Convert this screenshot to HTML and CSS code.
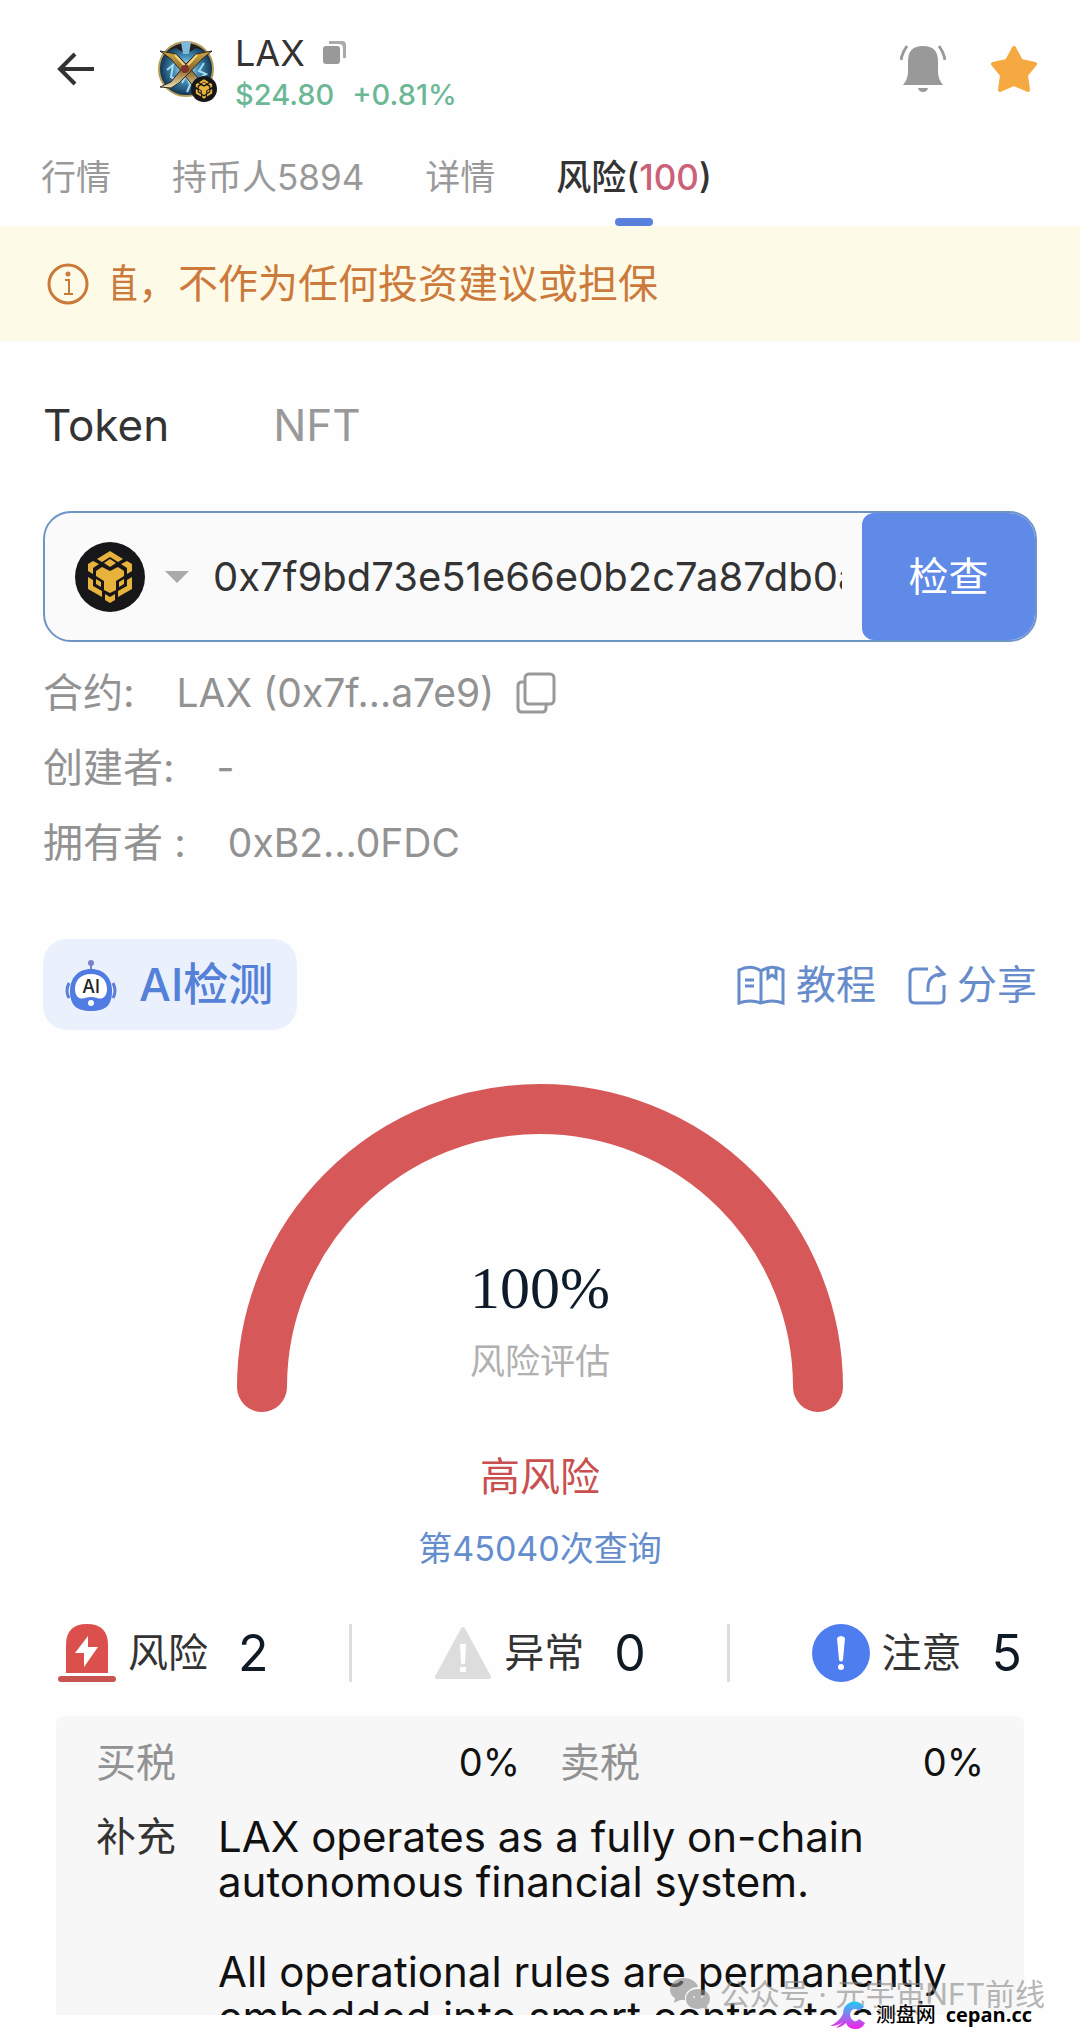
FILE: index.html
```
<!DOCTYPE html>
<html lang="zh-CN">
<head>
    <meta charset="UTF-8">
    <meta name="viewport" content="width=device-width, initial-scale=1.0">
    <title>LAX</title>
    <link rel="stylesheet" href="styles.css">
</head>
<body>
    <!-- shared chain logo -->
    <svg class="sprite" aria-hidden="true">
        <symbol id="bnb" viewBox="-35 -35 70 70">
            <circle r="35" fill="#17171a"/>
            <g fill="#e8b33c">
                <path d="M0-26 13-18 8-15 0-20-8-15-13-18Z"/>
                <path d="M0-18 6-14 0-10-6-14Z"/>
                <path d="M-17-16-11-13-17-9V-3L-22-6V-13Z"/>
                <path d="M17-16 11-13 17-9V-3L22-6V-13Z"/>
                <path d="M-14-6-8-10 0-6 8-10 14-6V-1L6 4V13L0 16-6 13V4L-14-1Z"/>
                <path d="M-14 2-9 5V10L-14 7Z"/>
                <path d="M14 2 9 5V10L14 7Z"/>
                <path d="M-22 0-17 3V9L-8 14V20L-22 12Z"/>
                <path d="M22 0 17 3V9L8 14V20L22 12Z"/>
                <path d="M-5 17 0 20 5 17V23L0 26-5 23Z"/>
            </g>
        </symbol>
    </svg>

    <header class="header">
        <button class="icon-btn back" aria-label="返回">
            <svg width="38" height="34" viewBox="0 0 38 34" fill="none" stroke="#333" stroke-width="4"><path d="M37 17H3M18 2 3 17 18 32"/></svg>
        </button>
        <div class="avatar">
            <svg width="58" height="58" viewBox="0 0 58 58">
                <defs>
                    <radialGradient id="orb"><stop offset="0" stop-color="#d5f0fa"/><stop offset=".45" stop-color="#4592bd"/><stop offset="1" stop-color="#0e304b"/></radialGradient>
                    <linearGradient id="blade" x1="0" y1="0" x2="0" y2="1"><stop offset="0" stop-color="#d2a843"/><stop offset=".5" stop-color="#8c682b"/><stop offset="1" stop-color="#e9dfb5"/></linearGradient>
                </defs>
                <circle cx="29" cy="29" r="27" fill="url(#orb)" stroke="#b59a58" stroke-width="2"/>
                <path d="M10 11Q29-4 48 11L39 8 29 14 19 8Z" fill="#231e1c"/>
                <path d="M24 2h10l-2 12h-6Z" fill="#7cb9dd"/>
                <path d="M10 30l6-5-2 12 6 3-6 6M47 23l-5 8 7 3-9 5M25 43l4-8 4 10-3 7" fill="none" stroke="#a8daef" stroke-width="2"/>
                <path d="M3 11 19 14 32 27 49 48 40 51 25 32 14 19Z" fill="url(#blade)" stroke="#362a20"/>
                <path d="M55 11 39 14 26 27 14 42 3 47 14 48 22 43 33 32 45 19Z" fill="url(#blade)" stroke="#362a20"/>
                <path d="M18 15 28 26M40 15 31 25" stroke="#f1d681" stroke-width="2"/>
                <circle cx="28" cy="29" r="4" fill="#7e332a"/>
            </svg>
            <svg class="avatar-chain"><use href="#bnb"/></svg>
        </div>
        <div class="coin">
            <div class="coin-name">
                <h1>LAX</h1>
                <button class="icon-btn" aria-label="复制">
                    <svg width="23" height="24" viewBox="0 0 23 24"><path d="M6 0H19Q23 0 23 4V17H20V7Q20 3 16 3H6Z" fill="#aaa"/><rect y="5" width="17" height="18" rx="3" fill="#999"/></svg>
                </button>
            </div>
            <div class="coin-price"><span>$24.80</span><span>+0.81%</span></div>
        </div>
        <div class="header-actions">
            <button class="icon-btn" aria-label="提醒">
                <svg width="46" height="48" viewBox="0 0 46 48"><path d="M8 16Q8 1 23 1T38 16V27Q38 34 43 40H3Q8 34 8 27Z" fill="#999"/><path d="M18 43H28Q27 47 23 47T18 43Z" fill="#999"/><path d="M7 1Q2 8 1 15M39 1Q44 8 45 15" fill="none" stroke="#999" stroke-width="3"/></svg>
            </button>
            <button class="icon-btn" aria-label="收藏">
                <svg width="48" height="48" viewBox="0 0 48 48"><path d="M24 3 31 16 45 19 36 30 38 45 24 39 10 45 12 30 3 19 17 16Z" fill="#f5a940" stroke="#f5a940" stroke-width="4" stroke-linejoin="round"/></svg>
            </button>
        </div>
    </header>

    <nav class="tabs">
        <a href="#">行情</a>
        <a href="#">持币人5894</a>
        <a href="#">详情</a>
        <a href="#" class="active">风险(<span class="tab-score">100</span>)</a>
    </nav>

    <div class="notice">
        <svg width="42" height="42" viewBox="0 0 42 42" fill="none" stroke="#c97a3a" stroke-width="3"><circle cx="21" cy="21" r="19"/><path d="M18 17H22V31M17 31H26" stroke-width="2"/><circle cx="21" cy="11" r="1" fill="#c97a3a"/></svg>
        <div class="notice-window"><p class="notice-text">值，不作为任何投资建议或担保</p></div>
    </div>

    <main class="main">
        <nav class="types">
            <a href="#" class="active">Token</a>
            <a href="#">NFT</a>
        </nav>

        <form class="search">
            <button type="button" class="chain" aria-label="选择链">
                <svg width="70" height="70"><use href="#bnb"/></svg>
                <svg width="24" height="12" viewBox="0 0 24 12"><path d="M0 0H24L12 12Z" fill="#aaa"/></svg>
            </button>
            <input type="text" class="address" aria-label="合约地址" value="0x7f9bd73e51e66e0b2c7a87db0a7e9">
            <button type="submit" class="check">检查</button>
        </form>

        <dl class="meta">
            <div>
                <dt>合约:</dt>
                <dd>LAX (0x7f...a7e9)</dd>
                <button class="icon-btn" aria-label="复制合约">
                    <svg width="40" height="42" viewBox="0 0 40 42" fill="none" stroke="#999" stroke-width="3"><rect x="9" y="2" width="29" height="30" rx="4"/><path d="M9 10H6Q2 10 2 14V36Q2 40 6 40H26Q30 40 30 36V32"/></svg>
                </button>
            </div>
            <div><dt>创建者:</dt><dd>-</dd></div>
            <div><dt>拥有者 :</dt><dd>0xB2...0FDC</dd></div>
        </dl>

        <div class="tools">
            <button class="ai-btn">
                <svg width="52" height="52" viewBox="0 0 52 52">
                    <path d="M26 4V12" stroke="#7a80cc" stroke-width="2"/>
                    <circle cx="26" cy="4" r="3" fill="#7a80cc"/>
                    <path d="M4 24Q0 32 4 39M48 24Q52 32 48 39" fill="none" stroke="#5b7fd6" stroke-width="3"/>
                    <path d="M26 10C39 10 47 19 47 32C47 46 41 52 26 52S5 46 5 32C5 19 13 10 26 10Z" fill="#4f7be3"/>
                    <path d="M26 15C37 15 42 22 42 30C42 38 37 41 32 39Q26 37 20 39C15 41 10 38 10 30C10 22 15 15 26 15Z" fill="#fff"/>
                    <circle cx="26" cy="44" r="3" fill="#fff"/>
                    <text x="26" y="34" class="robot-text">AI</text>
                </svg>
                AI检测
            </button>
            <div class="links">
                <a href="#">
                    <svg width="48" height="40" viewBox="0 0 48 40" fill="none" stroke="#678ccc" stroke-width="3"><path d="M24 6Q14-1 2 5V38Q13 34 24 38Q35 34 46 38V5Q34-1 24 6ZM24 6V38M8 15H17M8 21H17M31 4V13L35 10 39 13V3"/></svg>
                    教程
                </a>
                <a href="#">
                    <svg width="38" height="40" viewBox="0 0 38 40" fill="none" stroke="#678ccc" stroke-width="3"><path d="M20 4H7Q2 4 2 9V33Q2 38 7 38H31Q36 38 36 33V20M20 27V23Q20 9 35 9M28 1 36 9 29 11"/></svg>
                    分享
                </a>
            </div>
        </div>

        <section class="gauge">
            <svg width="606" height="328" viewBox="0 0 606 328"><path d="M25 303A278 278 0 0 1 581 303" fill="none" stroke="#d65858" stroke-width="50" stroke-linecap="round"/></svg>
            <div class="gauge-text">
                <div class="gauge-value">100%</div>
                <div class="gauge-label">风险评估</div>
            </div>
        </section>
        <p class="level">高风险</p>
        <p class="queries">第45040次查询</p>

        <div class="stats">
            <div class="stat">
                <svg width="58" height="58" viewBox="0 0 58 58"><path d="M8 49V21Q8 0 29 0T50 21V49Z" fill="#db504d"/><rect y="52" width="58" height="6" rx="3" fill="#c85451"/><path d="M30 12 17 29H26V43L40 23H30Z" fill="#fff"/></svg>
                <span>风险</span><strong>2</strong>
            </div>
            <div class="stat">
                <svg width="58" height="58" viewBox="0 0 58 58"><path d="M29 5 55 53H3Z" fill="#ddd" stroke="#ddd" stroke-width="4" stroke-linejoin="round"/><path d="M26 20H32L31 40H27Z" fill="#fff"/><rect x="26" y="43" width="6" height="5" fill="#fff"/></svg>
                <span>异常</span><strong>0</strong>
            </div>
            <div class="stat">
                <svg width="58" height="58" viewBox="0 0 58 58"><circle cx="29" cy="29" r="29" fill="#4e7df0"/><path d="M25 14Q29 10 33 14L31 36Q29 39 27 36Z" fill="#fff"/><circle cx="29" cy="43" r="3" fill="#fff"/></svg>
                <span>注意</span><strong>5</strong>
            </div>
        </div>

        <section class="card">
            <div class="taxes">
                <div><span>买税</span><b>0%</b></div>
                <div><span>卖税</span><b>0%</b></div>
            </div>
            <div class="extra">
                <h2>补充</h2>
                <div>
                    <p>LAX operates as a fully on-chain autonomous financial system.</p>
                    <p>All operational rules are permanently embedded into smart contracts and</p>
                </div>
            </div>
        </section>
    </main>

    <div class="account-mark">
        <svg width="40" height="32" viewBox="0 0 40 32" fill="#888"><path d="M14 0C6 0 0 5 0 12Q0 17 5 20L4 25 10 22H15C14 15 20 9 28 9C27 4 21 0 14 0Z"/><path d="M28 11C21 11 16 15 16 21S21 31 28 31L33 30 38 32 37 28Q40 25 40 21C40 15 35 11 28 11Z"/><circle cx="24" cy="19" r="1" fill="#eee"/><circle cx="32" cy="19" r="1" fill="#eee"/></svg>
        <span>公众号 · 元宇宙NFT前线</span>
    </div>
    <div class="site-mark">
        <svg width="36" height="28" viewBox="0 0 36 28">
            <defs><linearGradient id="mark" x1="0" y1="0" x2="0" y2="1"><stop offset="0" stop-color="#20c8f5"/><stop offset=".5" stop-color="#8c7af0"/><stop offset="1" stop-color="#f51ee6"/></linearGradient></defs>
            <path d="M34 6Q29-1 21 1Q13 4 13 13Q9 21 0 25Q8 25 13 21L6 27Q12 26 16 22Q18 28 26 28Q32 28 35 22L29 18Q27 21 24 20Q20 18 20 13Q21 8 25 8Q28 8 29 10Z" fill="url(#mark)"/>
        </svg>
        <span>测盘网</span>
        <b>cepan.cc</b>
    </div>
</body>
</html>
```
FILE: styles.css
```
* {
    margin: 0;
    padding: 0;
    box-sizing: border-box;
}

body {
    font-family: Inter, 'Noto Sans CJK SC', sans-serif;
    font-size: 40px;
    line-height: 48px;
    color: #333;
    background: #fefefe;
    height: 100vh;
    padding-bottom: 22px;
    display: flex;
    flex-direction: column;
    overflow: hidden;
    position: relative;
}

a {
    color: inherit;
    text-decoration: none;
}

button {
    font: inherit;
    border: none;
    background: none;
    cursor: pointer;
}

svg {
    display: block;
    flex-shrink: 0;
}

.sprite {
    position: absolute;
    width: 0;
    height: 0;
}

.icon-btn {
    display: flex;
}

/* header */
.header {
    display: flex;
    align-items: center;
    height: 138px;
    padding: 0 42px 0 57px;
    flex-shrink: 0;
}

.avatar {
    position: relative;
    margin: 0 20px 0 62px;
}

.avatar-chain {
    position: absolute;
    right: -2px;
    bottom: -4px;
    width: 26px;
    height: 26px;
}

.coin {
    padding-top: 10px;
}

.coin-name {
    display: flex;
    align-items: center;
    gap: 18px;
}

.coin-name h1 {
    font-size: 36px;
    line-height: 42px;
    font-weight: 400;
}

.coin-price {
    display: flex;
    gap: 18px;
    font-size: 29px;
    line-height: 42px;
    font-weight: 500;
    color: #6cb896;
}

.header-actions {
    display: flex;
    gap: 44px;
    margin-left: auto;
}

/* tabs */
.tabs {
    display: flex;
    gap: 61px;
    height: 88px;
    padding: 0 41px;
    font-size: 35px;
    line-height: 78px;
    color: #999;
    flex-shrink: 0;
}

.tabs .active {
    position: relative;
    color: #333;
    font-weight: 500;
}

.tabs .active::after {
    content: '';
    position: absolute;
    left: 50%;
    bottom: 0;
    width: 38px;
    height: 8px;
    margin-left: -19px;
    border-radius: 4px;
    background: #5a80dd;
}

.tab-score {
    color: #cc6078;
}

/* scrolling notice */
.notice {
    display: flex;
    align-items: center;
    gap: 24px;
    height: 115px;
    padding: 0 47px;
    background: #fefae8;
    color: #cc7a3c;
    flex-shrink: 0;
}

.notice-window {
    flex: 1;
    overflow: hidden;
}

.notice-text {
    margin-left: -15px;
    line-height: 60px;
    white-space: nowrap;
}

.main {
    flex: 1;
    min-height: 0;
    padding: 54px 43px 0;
    display: flex;
    flex-direction: column;
    overflow: hidden;
}

.main > * {
    flex-shrink: 0;
}

.types {
    display: flex;
    gap: 104px;
    font-size: 44px;
    line-height: 60px;
    color: #999;
}

.types .active {
    color: #333;
}

/* address search */
.search {
    display: flex;
    height: 131px;
    margin-top: 56px;
    border: 2px solid #6f94c8;
    border-radius: 28px;
    background: #fafafa;
    overflow: hidden;
}

.chain {
    display: flex;
    align-items: center;
    gap: 20px;
    padding: 0 24px 0 30px;
}

.address {
    flex: 1;
    min-width: 0;
    margin-right: 20px;
    border: none;
    outline: none;
    background: none;
    font: inherit;
    color: #333;
}

.check {
    width: 173px;
    border-radius: 12px 0 0 12px;
    background: #5f8ae8;
    color: #fff;
}

/* contract info */
.meta {
    margin-top: 13px;
    line-height: 75px;
    color: #929292;
}

.meta div {
    display: flex;
    align-items: center;
    height: 75px;
}

.meta dd {
    margin: 0 22px 0 42px;
    font-size: 39px;
}

.tools {
    display: flex;
    justify-content: space-between;
    align-items: center;
    margin-top: 59px;
}

.ai-btn {
    display: flex;
    align-items: center;
    gap: 22px;
    height: 91px;
    padding: 0 24px 0 22px;
    border-radius: 24px;
    background: #ebf1fc;
    color: #5580d8;
    font-size: 45px;
    font-weight: 500;
}

.robot-text {
    font-size: 18px;
    text-anchor: middle;
    fill: #222;
}

.links {
    display: flex;
    gap: 32px;
    color: #678ccc;
}

.links a {
    display: flex;
    align-items: center;
    gap: 11px;
}

/* risk gauge */
.gauge {
    position: relative;
    align-self: center;
    margin-top: 54px;
}

.gauge-text {
    position: absolute;
    left: 0;
    right: 0;
    bottom: 29px;
    text-align: center;
}

.gauge-value {
    font-family: 'Liberation Serif', serif;
    font-size: 60px;
    line-height: 64px;
    color: #0d1b2a;
}

.gauge-label {
    margin-top: 19px;
    font-size: 35px;
    line-height: 44px;
    color: #b0b0b0;
}

.level {
    margin-top: 35px;
    line-height: 60px;
    text-align: center;
    color: #c8504f;
}

.queries {
    margin-top: 20px;
    font-size: 34px;
    line-height: 44px;
    text-align: center;
    color: #648dcd;
}

/* counters */
.stats {
    display: flex;
    justify-content: space-between;
    margin-top: 53px;
    padding: 0 15px;
}

.stat {
    display: flex;
    align-items: center;
    height: 58px;
}

.stat + .stat::before {
    content: '';
    width: 3px;
    height: 58px;
    margin-right: 82px;
    background: #ddd;
}

.stat span {
    margin: 0 30px 0 12px;
}

.stat strong {
    font-size: 50px;
    font-weight: 400;
    color: #101a24;
}

/* details card */
.card {
    flex: 1 0 0;
    min-height: 0;
    margin: 34px 13px 0;
    padding: 24px 40px 0;
    border-radius: 8px 8px 0 0;
    background: #f7f7f7;
    line-height: 45px;
    overflow: hidden;
}

.taxes {
    display: grid;
    grid-template-columns: 1fr 1fr;
    gap: 40px;
}

.taxes div {
    display: flex;
    justify-content: space-between;
    color: #929292;
}

.taxes b {
    font-weight: 400;
    font-size: 38px;
    color: #111;
}

.extra {
    display: flex;
    gap: 42px;
    margin-top: 29px;
    color: #111;
}

.extra h2 {
    font-size: 40px;
    font-weight: 400;
    color: #333;
    flex-shrink: 0;
}

.extra p {
    margin-bottom: 45px;
    font-size: 42px;
}

/* marks over the bottom edge */
.account-mark {
    position: absolute;
    right: 35px;
    bottom: 22px;
    display: flex;
    align-items: center;
    gap: 10px;
    font-size: 30px;
    line-height: 42px;
    color: #888;
    opacity: 0.6;
}

.site-mark {
    position: absolute;
    right: 48px;
    bottom: 8px;
    display: flex;
    align-items: center;
    gap: 10px;
    font-size: 20px;
    line-height: 28px;
    font-weight: 500;
    color: #000;
    text-shadow: 0 0 3px #fff, 0 0 3px #fff, 0 0 3px #fff, 0 0 3px #fff;
}

.site-mark b {
    font-family: 'Open Sans', sans-serif;
    font-size: 20px;
}
```
